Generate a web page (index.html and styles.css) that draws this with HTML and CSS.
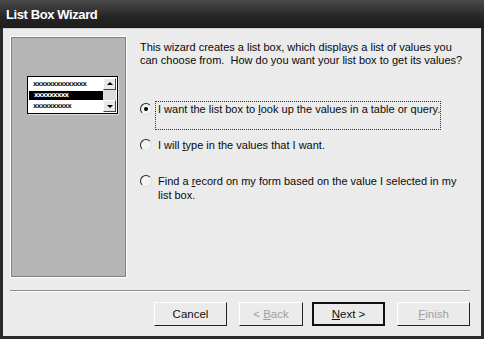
FILE: index.html
```html
<!DOCTYPE html>
<html lang="en">
<head>
    <meta charset="UTF-8">
    <meta name="viewport" content="width=device-width, initial-scale=1.0">
    <title>List Box Wizard</title>
    <link rel="stylesheet" href="styles.css">
</head>
<body>
    <div class="window">
        <div class="titlebar">List Box Wizard</div>
        <div class="client">
            <div class="main">
                <div class="side">
                    <div class="preview">
                        <div class="rows">
                            <div class="row">xxxxxxxxxxxxxx</div>
                            <div class="row selected">xxxxxxxxx</div>
                            <div class="row">xxxxxxxxxx</div>
                        </div>
                        <div class="scroll">
                            <div class="arrow up"></div>
                            <div class="track"></div>
                            <div class="arrow down"></div>
                        </div>
                    </div>
                </div>
                <div class="content">
                    <p class="intro">This wizard creates a list box, which displays a list of values you<br>can choose from.&nbsp; How do you want your list box to get its values?</p>

                    <div class="option first">
                        <span class="radio checked"></span>
                        <span class="label focus">I want the list box to <u>l</u>ook up the values in a table or query.</span>
                    </div>
                    <div class="option">
                        <span class="radio"></span>
                        <span class="label">I will <u>t</u>ype in the values that I want.</span>
                    </div>
                    <div class="option">
                        <span class="radio"></span>
                        <span class="label">Find a <u>r</u>ecord on my form based on the value I selected in my<br>list box.</span>
                    </div>
                </div>
            </div>
            <div class="sep"></div>
            <div class="buttons">
                <button class="btn">Cancel</button>
                <button class="btn" disabled>&lt; <u>B</u>ack</button>
                <button class="btn default"><u>N</u>ext &gt;</button>
                <button class="btn" disabled><u>F</u>inish</button>
            </div>
        </div>
    </div>
</body>
</html>
```
FILE: styles.css
```css
body {
    margin: 0;
    font-family: 'Liberation Sans', Arial, sans-serif;
    font-size: 11px;
    color: #0a0a0a;
}
.window {
    width: 484px;
    height: 339px;
    box-sizing: border-box;
    background: #2a2a2a;
    padding: 0 3px 3px 3px;
    display: flex;
    flex-direction: column;
}
.titlebar {
    height: 28px;
    margin: 0 -3px;
    padding-left: 6px;
    background: linear-gradient(#4a4a4a, #262626 60%, #1c1c1c);
    color: #fff;
    font-family: 'Liberation Sans', Arial, sans-serif;
    font-weight: bold;
    font-size: 13px;
    letter-spacing: -0.4px;
    line-height: 30px;
}
.client {
    flex: 1;
    background: #ebebeb;
    border-top: 1px solid #d0d0d0;
    display: flex;
    flex-direction: column;
}
.main {
    display: flex;
    padding: 7px 0 0 7px;
    height: 242px;
}
.side {
    width: 113px;
    height: 238px;
    background: #b5b5b5;
    border: 1px solid #808080;
    box-shadow: 0 0 0 1px #fff;
    margin: 1px;
    flex-shrink: 0;
}
.preview {
    margin: 38px 0 0 15px;
    width: 89px;
    height: 36px;
    background: #fff;
    border: 1px solid #000;
    box-shadow: 1px 1px 0 #ddd;
    display: flex;
}
.rows {
    flex: 1;
    padding-top: 3px;
}
.row {
    height: 9px;
    padding-left: 5px;
    font-family: 'DejaVu Sans', sans-serif;
    font-weight: bold;
    font-size: 7px;
    line-height: 9px;
    letter-spacing: -0.7px;
    color: #222;
    margin-bottom: 2px;
}
.row.selected {
    background: #000;
    color: #fff;
    margin-left: 1px;
}
.scroll {
    width: 13px;
    display: flex;
    flex-direction: column;
    padding: 1px 1px 1px 0;
}
.arrow {
    height: 10px;
    background: #e8e8e8;
    border: 1px solid;
    border-color: #fff #444 #444 #fff;
    position: relative;
}
.arrow::after {
    content: "";
    position: absolute;
    left: 3px;
    border-left: 3px solid transparent;
    border-right: 3px solid transparent;
}
.arrow.up::after {
    top: 3px;
    border-bottom: 3px solid #000;
}
.arrow.down::after {
    top: 4px;
    border-top: 3px solid #000;
}
.track {
    flex: 1;
    background: #dcdcdc;
}
.content {
    padding: 5px 0 0 13px;
    flex: 1;
}
.intro {
    margin: 0;
    white-space: nowrap;
    line-height: 13px;
}
.option {
    display: flex;
    align-items: flex-start;
    height: 36px;
}
.option.first {
    margin-top: 34px;
}
.radio {
    width: 10px;
    height: 10px;
    border-radius: 50%;
    border: 1px solid;
    border-color: #222 #e0e0e0 #e0e0e0 #222;
    background: #f4f4f4;
    margin: 2px 3px 0 0;
    flex-shrink: 0;
    position: relative;
}
.radio.checked::after {
    content: "";
    position: absolute;
    left: 3px;
    top: 3px;
    width: 4px;
    height: 4px;
    border-radius: 50%;
    background: #000;
}
.label {
    width: 281px;
    padding: 0 1px 0 2px;
    white-space: nowrap;
    line-height: 14px;
    border: 1px dotted transparent;
}
.label.focus {
    border-color: #333;
    height: 27px;
}
.sep {
    margin: 12px 11px 0 7px;
    border-top: 1px solid #8a8a8a;
    border-bottom: 1px solid #fff;
}
.buttons {
    display: flex;
    justify-content: flex-end;
    padding: 10px 11px 0 0;
}
.btn {
    width: 73px;
    height: 24px;
    margin-left: 12px;
    padding: 0;
    background: #ebebeb;
    font-family: 'Liberation Sans', Arial, sans-serif;
    font-size: 11.5px;
    color: #111;
    border: 1px solid;
    border-color: #fff #222 #222 #fff;
}
.btn[disabled] {
    color: #a0a0a0;
    width: 64px;
}
.btn[disabled]:last-child {
    width: 73px;
}
.btn.default {
    border: 2px solid #111;
    margin-left: 9px;
}
```
